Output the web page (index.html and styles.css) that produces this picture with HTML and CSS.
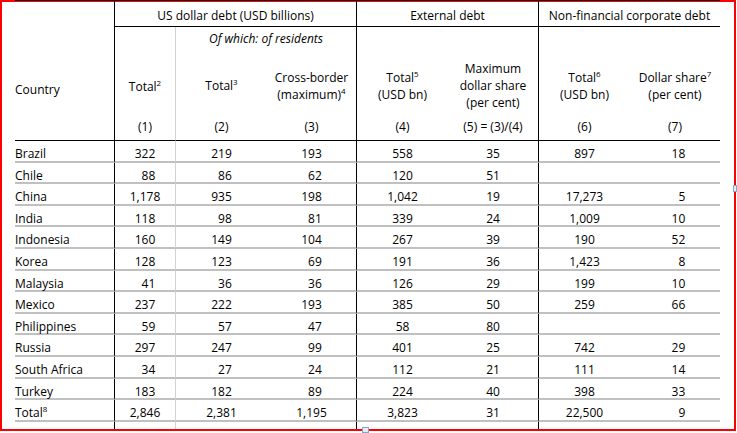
FILE: index.html
```html
<!DOCTYPE html>
<html>
<head>
<meta charset="utf-8">
<link rel="stylesheet" href="styles.css">
</head>
<body>
<div class="frame">
  <div class="tbl">
    <div class="country">Country</div>
    <div class="grp g3">US dollar debt (USD billions)</div>
    <div class="grp g2">External debt</div>
    <div class="grp g2">Non-financial corporate debt</div>

    <div class="bl"></div>
    <div class="gl ofwhich">Of which: of residents</div>
    <div class="bl s2"></div>
    <div class="bl s2"></div>

    <div class="lab bl"><div class="lt low">Total<span class="sup">2</span></div></div>
    <div class="lab gl"><div class="lt">Total<span class="sup">3</span></div></div>
    <div class="lab"><div class="lt">Cross-border<br>(maximum)<span class="sup">4</span></div></div>
    <div class="lab bl"><div class="lt">Total<span class="sup">5</span><br>(USD bn)</div></div>
    <div class="lab"><div class="lt">Maximum<br>dollar share<br>(per cent)</div></div>
    <div class="lab bl"><div class="lt">Total<span class="sup">6</span><br>(USD bn)</div></div>
    <div class="lab"><div class="lt">Dollar share<span class="sup">7</span><br>(per cent)</div></div>

    <div class="num-h bl">(1)</div>
    <div class="num-h gl">(2)</div>
    <div class="num-h">(3)</div>
    <div class="num-h bl">(4)</div>
    <div class="num-h">(5) = (3)/(4)</div>
    <div class="num-h bl">(6)</div>
    <div class="num-h">(7)</div>

    <div class="d name">Brazil</div><div class="d bl">322</div><div class="d gl">219</div><div class="d">193</div><div class="d bl">558</div><div class="d">35</div><div class="d bl">897</div><div class="d"><span class="p1">18</span></div>
    <div class="d name">Chile</div><div class="d bl"><span class="p1">88</span></div><div class="d gl"><span class="p1">86</span></div><div class="d"><span class="p1">62</span></div><div class="d bl">120</div><div class="d">51</div><div class="d bl"></div><div class="d"></div>
    <div class="d name">China</div><div class="d bl">1,178</div><div class="d gl">935</div><div class="d">198</div><div class="d bl">1,042</div><div class="d">19</div><div class="d bl">17,273</div><div class="d"><span class="p2">5</span></div>
    <div class="d name">India</div><div class="d bl">118</div><div class="d gl"><span class="p1">98</span></div><div class="d"><span class="p1">81</span></div><div class="d bl">339</div><div class="d">24</div><div class="d bl">1,009</div><div class="d"><span class="p1">10</span></div>
    <div class="d name">Indonesia</div><div class="d bl">160</div><div class="d gl">149</div><div class="d">104</div><div class="d bl">267</div><div class="d">39</div><div class="d bl">190</div><div class="d"><span class="p1">52</span></div>
    <div class="d name">Korea</div><div class="d bl">128</div><div class="d gl">123</div><div class="d"><span class="p1">69</span></div><div class="d bl">191</div><div class="d">36</div><div class="d bl">1,423</div><div class="d"><span class="p2">8</span></div>
    <div class="d name">Malaysia</div><div class="d bl"><span class="p1">41</span></div><div class="d gl"><span class="p1">36</span></div><div class="d"><span class="p1">36</span></div><div class="d bl">126</div><div class="d">29</div><div class="d bl">199</div><div class="d"><span class="p1">10</span></div>
    <div class="d name">Mexico</div><div class="d bl">237</div><div class="d gl">222</div><div class="d">193</div><div class="d bl">385</div><div class="d">50</div><div class="d bl">259</div><div class="d"><span class="p1">66</span></div>
    <div class="d name">Philippines</div><div class="d bl"><span class="p1">59</span></div><div class="d gl"><span class="p1">57</span></div><div class="d"><span class="p1">47</span></div><div class="d bl">58</div><div class="d">80</div><div class="d bl"></div><div class="d"></div>
    <div class="d name">Russia</div><div class="d bl">297</div><div class="d gl">247</div><div class="d"><span class="p1">99</span></div><div class="d bl">401</div><div class="d">25</div><div class="d bl">742</div><div class="d"><span class="p1">29</span></div>
    <div class="d name">South Africa</div><div class="d bl"><span class="p1">34</span></div><div class="d gl"><span class="p1">27</span></div><div class="d"><span class="p1">24</span></div><div class="d bl">112</div><div class="d">21</div><div class="d bl">111</div><div class="d"><span class="p1">14</span></div>
    <div class="d name">Turkey</div><div class="d bl">183</div><div class="d gl">182</div><div class="d"><span class="p1">89</span></div><div class="d bl">224</div><div class="d">40</div><div class="d bl">398</div><div class="d"><span class="p1">33</span></div>
    <div class="d name">Total<span class="sup">8</span></div><div class="d bl">2,846</div><div class="d gl">2,381</div><div class="d">1,195</div><div class="d bl">3,823</div><div class="d">31</div><div class="d bl">22,500</div><div class="d"><span class="p2">9</span></div>

    <div></div><div class="bl"></div><div class="gl"></div><div></div><div class="bl"></div><div></div><div class="bl"></div><div></div>
  </div>
</div>
<div class="handle hb"></div>
<div class="handle hr"></div>
</body>
</html>
```

FILE: styles.css
```css
html, body {
  margin: 0;
  padding: 0;
  background: #ffffff;
}

body {
  font-family: "Open Sans", "Noto Sans", sans-serif;
  font-size: 12px;
  color: #000000;
}

.frame {
  width: 736px;
  height: 431px;
  box-sizing: border-box;
  border: 2px solid #ff0000;
  padding-left: 13px;
}

.tbl {
  display: grid;
  width: 705px;
  height: 429px;
  margin-top: -2px;
  box-sizing: border-box;
  border-top: 1px solid #000000;
  grid-template-columns: 99px 61px 92px 89px 92px 90px 92px 90px;
  grid-template-rows: 26px 26px 65px 23px repeat(13, 21.6px) 1fr;
  line-height: 17px;
}

.tbl > div {
  box-sizing: border-box;
  min-width: 0;
  white-space: nowrap;
}

.bl { border-left: 1px solid #000000; }
.gl { border-left: 1px solid #d2d2d2; }
.s2 { grid-column: span 2; }

.country {
  grid-row: span 4;
  padding-top: 80px;
  border-bottom: 1px solid #000000;
}

.grp {
  text-align: center;
  padding-top: 6px;
  border-left: 1px solid #000000;
  border-bottom: 1px solid #000000;
}
.g3 { grid-column: span 3; }
.g2 { grid-column: span 2; }

.ofwhich {
  grid-column: span 2;
  text-align: center;
  font-style: italic;
  padding-top: 3px;
}

.lab {
  display: flex;
  flex-direction: column;
  justify-content: center;
  text-align: center;
}
.lt.low { padding-top: 1px; }

.num-h {
  text-align: center;
  border-bottom: 1px solid #000000;
}

.d {
  text-align: center;
  padding-top: 4px;
  border-bottom: 2px solid #c0c0c0;
}
.d.name { text-align: left; }

.p1 { padding-left: 1ch; }
.p2 { padding-left: 2ch; }

.sup {
  font-size: 8px;
  line-height: 0;
  vertical-align: 5px;
}

.handle {
  position: absolute;
  box-sizing: border-box;
  border: 1px solid #8ea4c2;
  background: #e4ebf4;
}
.hb { left: 362px; top: 427px; width: 7px; height: 6px; }
.hr { left: 733px; top: 185px; width: 4px; height: 7px; }
```
